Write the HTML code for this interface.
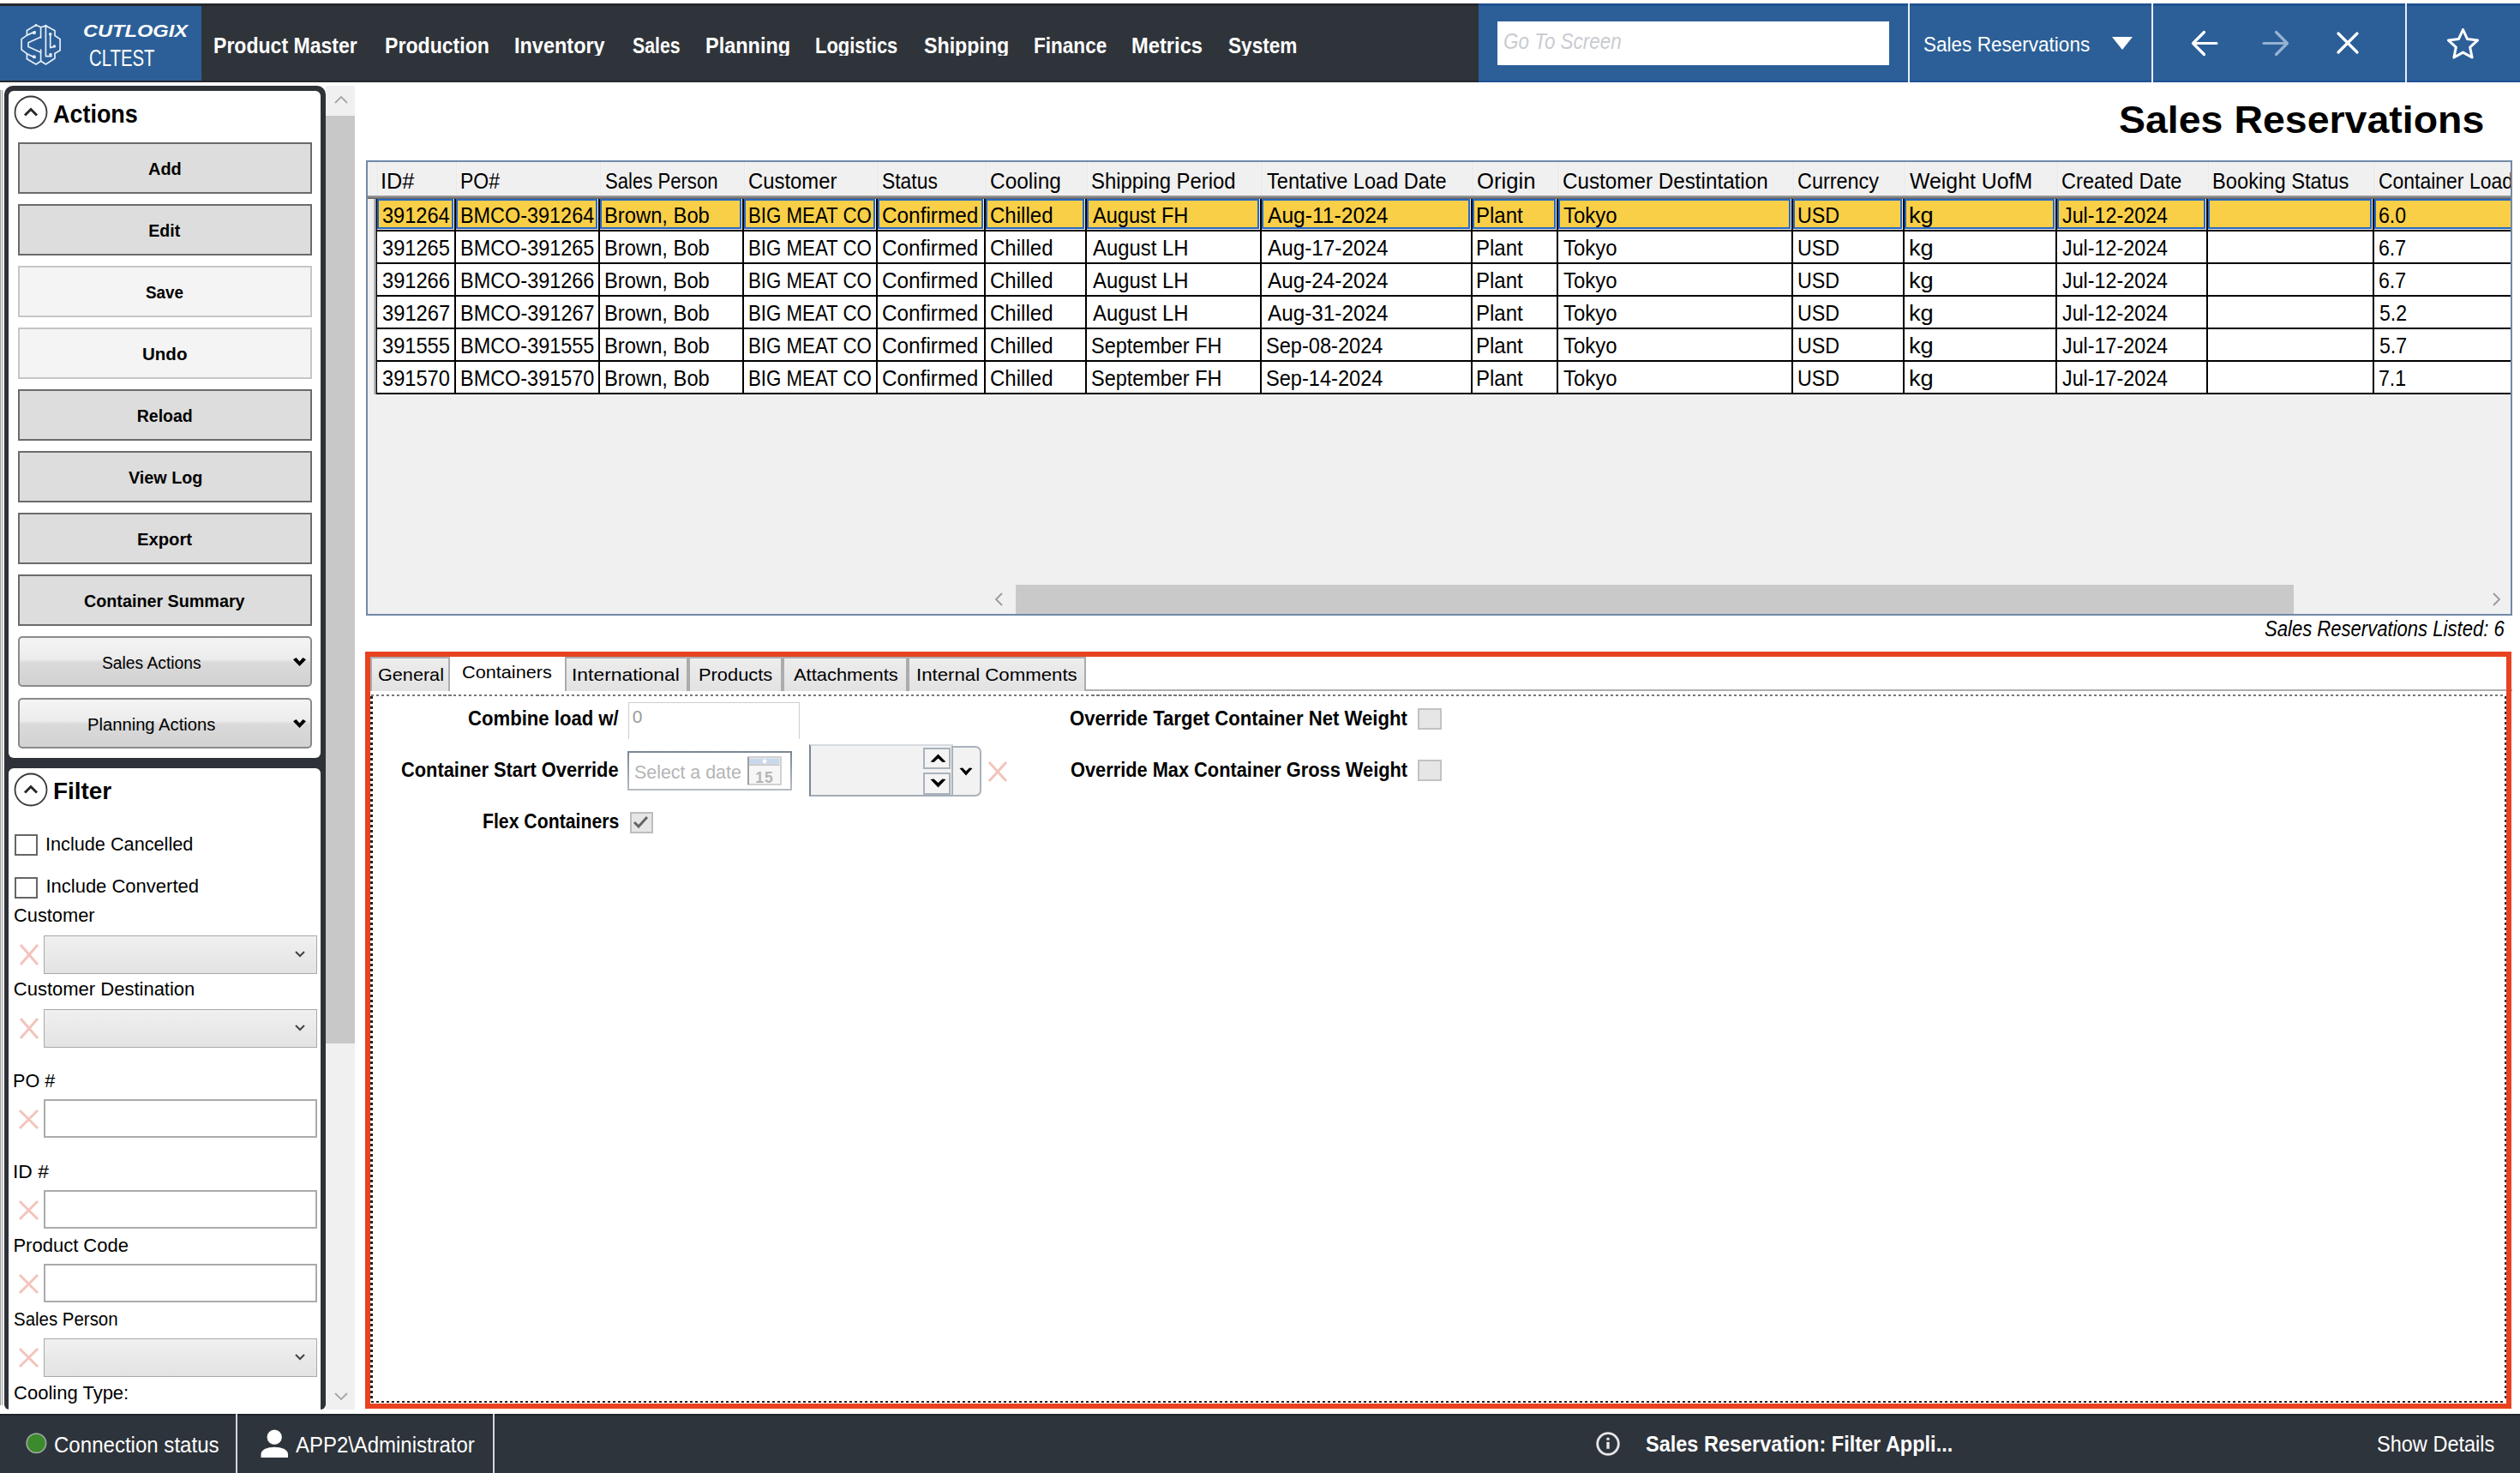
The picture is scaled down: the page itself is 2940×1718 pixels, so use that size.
<!DOCTYPE html>
<html><head><meta charset="utf-8"><style>
html,body{margin:0;padding:0;width:2940px;height:1718px;overflow:hidden;background:#fff;}
body{position:relative;font-family:"Liberation Sans", sans-serif;}
body div, body span, body svg{position:absolute;box-sizing:content-box;}
.t{white-space:nowrap;line-height:1;}
</style></head><body>
<div style="left:0px;top:4px;width:1725px;height:3px;background:#24282d"></div>
<div style="left:1725px;top:4px;width:1215px;height:3px;background:#1f5193"></div>
<div style="left:0px;top:7px;width:235px;height:87px;background:#2c5f98"></div>
<div style="left:235px;top:7px;width:1490px;height:87px;background:#2f343a"></div>
<div style="left:1725px;top:7px;width:1215px;height:87px;background:#2c5f98"></div>
<div style="left:0px;top:94px;width:1725px;height:2px;background:#25282d"></div>
<div style="left:1725px;top:94px;width:1215px;height:2px;background:#1f5193"></div>
<svg style="left:18px;top:22px" width="60" height="60" viewBox="0 0 60 60" fill="none" stroke="#e6eef6" stroke-width="1.7" stroke-linejoin="round" stroke-linecap="round">
<path d="M29.6 9.8 L24 7.3 L13.4 13.4 L13.4 19.1 L7.1 23.6 L7.1 35.8 L13.4 40.7 L13.4 46.8 L24 53 L29.7 49.3 L35.4 53 L46 46 L46 40.3 L52.1 36.7 L52.1 23.6 L46 19.5 L46 13.8 L35.4 8.1 L29.6 9.8"/>
<path d="M29.6 9.8 L29.6 22 M29.6 36 L29.6 49.3"/>
<path d="M13.4 19.1 L23 14.8 M13.4 40.7 L23 45.2"/>
<path d="M29.3 21.2 L15 27.7 L15 32.6 L29.3 39.1"/>
<path d="M35.4 8.1 L35.4 43.6 L42 43.6 M40.7 17.7 L40.7 33.6 L45.4 32.2"/>
</svg>
<svg style="left:18px;top:22px" width="60" height="60" viewBox="0 0 60 60" fill="#e6eef6"><circle cx="21.8" cy="16.2" r="2"/><circle cx="21.8" cy="44.3" r="2"/><circle cx="40.7" cy="17.7" r="1.8"/><circle cx="45.4" cy="32" r="1.8"/><circle cx="41" cy="41.5" r="1.8"/><circle cx="35.4" cy="8.3" r="1.6"/><circle cx="24" cy="7.5" r="1.4"/></svg>
<span class="t" style="left:96.52px;top:26.00px;font-size:20px;font-weight:700;color:#fff;font-style:italic;transform:scaleX(1.1810);transform-origin:0 0;">CUTLOGIX</span>
<span class="t" style="left:103.68px;top:55.00px;font-size:27px;font-weight:400;color:#fff;transform:scaleX(0.7528);transform-origin:0 0;">CLTEST</span>
<div style="left:0;top:30px;width:1725px;height:35px;overflow:hidden">
<span class="t" style="left:249.30px;top:11px;font-size:25px;font-weight:700;color:#fff;transform:scaleX(0.9222);transform-origin:0 0">Product Master</span>
<span class="t" style="left:448.70px;top:11px;font-size:25px;font-weight:700;color:#fff;transform:scaleX(0.9243);transform-origin:0 0">Production</span>
<span class="t" style="left:600.47px;top:11px;font-size:25px;font-weight:700;color:#fff;transform:scaleX(0.9391);transform-origin:0 0">Inventory</span>
<span class="t" style="left:737.66px;top:11px;font-size:25px;font-weight:700;color:#fff;transform:scaleX(0.8504);transform-origin:0 0">Sales</span>
<span class="t" style="left:823.47px;top:11px;font-size:25px;font-weight:700;color:#fff;transform:scaleX(0.9389);transform-origin:0 0">Planning</span>
<span class="t" style="left:951.47px;top:11px;font-size:25px;font-weight:700;color:#fff;transform:scaleX(0.8775);transform-origin:0 0">Logistics</span>
<span class="t" style="left:1077.60px;top:11px;font-size:25px;font-weight:700;color:#fff;transform:scaleX(0.9282);transform-origin:0 0">Shipping</span>
<span class="t" style="left:1205.53px;top:11px;font-size:25px;font-weight:700;color:#fff;transform:scaleX(0.9022);transform-origin:0 0">Finance</span>
<span class="t" style="left:1320.46px;top:11px;font-size:25px;font-weight:700;color:#fff;transform:scaleX(0.9485);transform-origin:0 0">Metrics</span>
<span class="t" style="left:1433.32px;top:11px;font-size:25px;font-weight:700;color:#fff;transform:scaleX(0.9049);transform-origin:0 0">System</span>
</div>
<div style="left:1747px;top:25px;width:457px;height:51px;background:#fff"></div>
<span class="t" style="left:1753.88px;top:36.00px;font-size:25px;font-weight:400;color:#c9ccd0;font-style:italic;transform:scaleX(0.8988);transform-origin:0 0;">Go To Screen</span>
<div style="left:2226px;top:4px;width:2px;height:92px;background:#e8edf3"></div>
<div style="left:2510px;top:4px;width:2px;height:92px;background:#e8edf3"></div>
<div style="left:2806px;top:4px;width:2px;height:92px;background:#e8edf3"></div>
<span class="t" style="left:2244.49px;top:40.00px;font-size:24.5px;font-weight:400;color:#fff;transform:scaleX(0.9201);transform-origin:0 0;">Sales Reservations</span>
<svg style="left:2463px;top:42px" width="26" height="17"><path d="M1 1 L25 1 L13 16 Z" fill="#fff"/></svg>
<svg style="left:2554px;top:33px" width="36" height="36" fill="none" stroke="#fff" stroke-width="3.2" stroke-linecap="round" stroke-linejoin="round"><path d="M4.5 17.5 L32 17.5 M17.5 4.5 L4.5 17.5 L17.5 30.5"/></svg>
<svg style="left:2637px;top:33px" width="36" height="36" fill="none" stroke="#94b3d3" stroke-width="3.2" stroke-linecap="round" stroke-linejoin="round"><path d="M4 17.5 L31.5 17.5 M18.5 4.5 L31.5 17.5 L18.5 30.5"/></svg>
<svg style="left:2722px;top:33px" width="34" height="34" fill="none" stroke="#fff" stroke-width="3.2" stroke-linecap="round"><path d="M6 6 L28 28 M28 6 L6 28"/></svg>
<svg style="left:2855px;top:32.5px" width="37" height="38" fill="none" stroke="#fff" stroke-width="3" stroke-linejoin="round"><path d="M18.50 1.50 L23.55 12.54 L35.62 13.94 L26.68 22.16 L29.08 34.06 L18.50 28.10 L7.92 34.06 L10.32 22.16 L1.38 13.94 L13.45 12.54 Z"/></svg>
<div style="left:0px;top:105px;width:1px;height:1534px;background:#9a9a9a"></div>
<div style="left:2px;top:105px;width:1px;height:1534px;background:#9a9a9a"></div>
<div style="left:5px;top:100px;width:375px;height:1544px;background:#2e3238;border-radius:10px 10px 6px 6px"></div>
<div style="left:10px;top:106px;width:364px;height:778px;background:#fff;border-radius:6px"></div>
<div style="left:10px;top:896px;width:364px;height:748px;background:#fff;border-radius:6px 6px 0 0"></div>
<div style="left:380px;top:100px;width:34px;height:35px;background:#f0f0f0"></div>
<div style="left:380px;top:135px;width:34px;height:1082px;background:#c8c8c8"></div>
<div style="left:380px;top:1217px;width:34px;height:427px;background:#f0f0f0"></div>
<svg style="left:389px;top:110px" width="18" height="12" fill="none" stroke="#a6a6a6" stroke-width="1.8"><path d="M2 10 L9 3 L16 10"/></svg>
<svg style="left:389px;top:1623px" width="18" height="12" fill="none" stroke="#a6a6a6" stroke-width="1.8"><path d="M2 2 L9 9 L16 2"/></svg>
<svg style="left:15px;top:110px" width="42" height="42" fill="none" stroke="#3a3a3a" stroke-width="1.8"><circle cx="21" cy="21" r="18.5"/><path d="M14 24.5 L21 17.5 L28 24.5" stroke="#2a2a2a" stroke-width="3"/></svg>
<span class="t" style="left:62.33px;top:119.00px;font-size:29px;font-weight:700;color:#000;transform:scaleX(0.9291);transform-origin:0 0;">Actions</span>
<div style="left:21px;top:166px;width:339px;height:56px;background:#dddddd;border:2px solid #6b6b6b"></div>
<span class="t" style="left:173.30px;top:188.00px;font-size:19.5px;font-weight:700;color:#000;transform:scaleX(1.0229);transform-origin:0 0;">Add</span>
<div style="left:21px;top:238px;width:339px;height:56px;background:#dddddd;border:2px solid #6b6b6b"></div>
<span class="t" style="left:173.33px;top:260.00px;font-size:19.5px;font-weight:700;color:#000;">Edit</span>
<div style="left:21px;top:310px;width:339px;height:56px;background:#f4f4f4;border:2px solid #c6c6c6"></div>
<span class="t" style="left:170.33px;top:332.00px;font-size:19.5px;font-weight:700;color:#000;transform:scaleX(0.9669);transform-origin:0 0;">Save</span>
<div style="left:21px;top:382px;width:339px;height:56px;background:#f4f4f4;border:2px solid #c6c6c6"></div>
<span class="t" style="left:165.87px;top:404.00px;font-size:19.5px;font-weight:700;color:#000;transform:scaleX(1.0528);transform-origin:0 0;">Undo</span>
<div style="left:21px;top:454px;width:339px;height:56px;background:#dddddd;border:2px solid #6b6b6b"></div>
<span class="t" style="left:159.78px;top:476.00px;font-size:19.5px;font-weight:700;color:#000;">Reload</span>
<div style="left:21px;top:526px;width:339px;height:56px;background:#dddddd;border:2px solid #6b6b6b"></div>
<span class="t" style="left:149.70px;top:548.00px;font-size:19.5px;font-weight:700;color:#000;transform:scaleX(1.0137);transform-origin:0 0;">View Log</span>
<div style="left:21px;top:598px;width:339px;height:56px;background:#dddddd;border:2px solid #6b6b6b"></div>
<span class="t" style="left:159.74px;top:620.00px;font-size:19.5px;font-weight:700;color:#000;transform:scaleX(1.0373);transform-origin:0 0;">Export</span>
<div style="left:21px;top:670px;width:339px;height:56px;background:#dddddd;border:2px solid #6b6b6b"></div>
<span class="t" style="left:98.21px;top:692.00px;font-size:19.5px;font-weight:700;color:#000;transform:scaleX(1.0121);transform-origin:0 0;">Container Summary</span>
<div style="left:21px;top:742px;width:339px;height:55px;border:2px solid #8a8a8a;border-radius:5px;background:linear-gradient(#f4f4f4 0%,#ececec 45%,#dadada 52%,#d2d2d2 100%)"></div>
<span class="t" style="left:119.43px;top:763.00px;font-size:20px;font-weight:400;color:#000;transform:scaleX(0.9629);transform-origin:0 0;">Sales Actions</span>
<svg style="left:342px;top:767px" width="15" height="11"><path d="M0 2.2 L3.6 0 L7.5 4.6 L11.4 0 L15 2.2 L7.5 10 Z" fill="#000"/></svg>
<div style="left:21px;top:814px;width:339px;height:55px;border:2px solid #8a8a8a;border-radius:5px;background:linear-gradient(#f4f4f4 0%,#ececec 45%,#dadada 52%,#d2d2d2 100%)"></div>
<span class="t" style="left:102.38px;top:835.00px;font-size:20px;font-weight:400;color:#000;transform:scaleX(1.0096);transform-origin:0 0;">Planning Actions</span>
<svg style="left:342px;top:839px" width="15" height="11"><path d="M0 2.2 L3.6 0 L7.5 4.6 L11.4 0 L15 2.2 L7.5 10 Z" fill="#000"/></svg>
<svg style="left:15px;top:900px" width="42" height="42" fill="none" stroke="#3a3a3a" stroke-width="1.8"><circle cx="21" cy="21" r="18.5"/><path d="M14 24.5 L21 17.5 L28 24.5" stroke="#2a2a2a" stroke-width="3"/></svg>
<span class="t" style="left:62.19px;top:909.00px;font-size:28px;font-weight:700;color:#000;transform:scaleX(0.9967);transform-origin:0 0;">Filter</span>
<div style="left:17px;top:973px;width:23px;height:21px;border:2px solid #666;background:#fff"></div>
<span class="t" style="left:53.45px;top:974.00px;font-size:22px;font-weight:400;color:#000;transform:scaleX(0.9855);transform-origin:0 0;">Include Cancelled</span>
<div style="left:17px;top:1023px;width:23px;height:21px;border:2px solid #666;background:#fff"></div>
<span class="t" style="left:53.42px;top:1023.00px;font-size:22px;font-weight:400;color:#000;">Include Converted</span>
<span class="t" style="left:15.81px;top:1057.00px;font-size:22px;font-weight:400;color:#000;transform:scaleX(0.9912);transform-origin:0 0;">Customer</span>
<svg style="left:22px;top:1100px" width="24" height="27" fill="none" stroke="#f2c4bc" stroke-width="3"><path d="M2 2 L22 25 M22 2 L2 25"/></svg>
<div style="left:51px;top:1091px;width:317px;height:43px;border:1px solid #a9a9a9;background:linear-gradient(#f0f0f0,#e3e3e3)"></div>
<svg style="left:343px;top:1107.5px" width="14" height="10" fill="none" stroke="#444" stroke-width="2"><path d="M2 2 L7 7 L12 2"/></svg>
<span class="t" style="left:15.80px;top:1143.00px;font-size:22px;font-weight:400;color:#000;">Customer Destination</span>
<svg style="left:22px;top:1186px" width="24" height="27" fill="none" stroke="#f2c4bc" stroke-width="3"><path d="M2 2 L22 25 M22 2 L2 25"/></svg>
<div style="left:51px;top:1177px;width:317px;height:43px;border:1px solid #a9a9a9;background:linear-gradient(#f0f0f0,#e3e3e3)"></div>
<svg style="left:343px;top:1193.5px" width="14" height="10" fill="none" stroke="#444" stroke-width="2"><path d="M2 2 L7 7 L12 2"/></svg>
<span class="t" style="left:15.47px;top:1250.00px;font-size:22px;font-weight:400;color:#000;transform:scaleX(0.9816);transform-origin:0 0;">PO #</span>
<svg style="left:21px;top:1293px" width="25" height="25" fill="none" stroke="#f2c4bc" stroke-width="3"><path d="M2 2 L23 23 M23 2 L2 23"/></svg>
<div style="left:51px;top:1282px;width:315px;height:41px;border:2px solid #ababab;background:#fff"></div>
<span class="t" style="left:15.14px;top:1356.00px;font-size:22px;font-weight:400;color:#000;transform:scaleX(1.0397);transform-origin:0 0;">ID #</span>
<svg style="left:21px;top:1399px" width="25" height="25" fill="none" stroke="#f2c4bc" stroke-width="3"><path d="M2 2 L23 23 M23 2 L2 23"/></svg>
<div style="left:51px;top:1388px;width:315px;height:41px;border:2px solid #ababab;background:#fff"></div>
<span class="t" style="left:15.44px;top:1442.00px;font-size:22px;font-weight:400;color:#000;">Product Code</span>
<svg style="left:21px;top:1485px" width="25" height="25" fill="none" stroke="#f2c4bc" stroke-width="3"><path d="M2 2 L23 23 M23 2 L2 23"/></svg>
<div style="left:51px;top:1474px;width:315px;height:41px;border:2px solid #ababab;background:#fff"></div>
<span class="t" style="left:16.28px;top:1528.00px;font-size:22px;font-weight:400;color:#000;transform:scaleX(0.9293);transform-origin:0 0;">Sales Person</span>
<svg style="left:21px;top:1571px" width="25" height="25" fill="none" stroke="#f2c4bc" stroke-width="3"><path d="M2 2 L23 23 M23 2 L2 23"/></svg>
<div style="left:51px;top:1561px;width:317px;height:43px;border:1px solid #a9a9a9;background:linear-gradient(#f0f0f0,#e3e3e3)"></div>
<svg style="left:343px;top:1577.5px" width="14" height="10" fill="none" stroke="#444" stroke-width="2"><path d="M2 2 L7 7 L12 2"/></svg>
<span class="t" style="left:16.10px;top:1614.00px;font-size:22px;font-weight:400;color:#000;">Cooling Type:</span>
<span class="t" style="left:2471.61px;top:119.00px;font-size:43.5px;font-weight:700;color:#000;transform:scaleX(1.0686);transform-origin:0 0;">Sales Reservations</span>
<div style="left:427px;top:187px;width:2500px;height:527px;border:2px solid #7189a9;background:#f0f0f0"></div>
<div style="left:429px;top:189px;width:2500px;height:43px;overflow:hidden">
<div style="left:11px;top:0;width:2px;height:39px;background:linear-gradient(90deg,#e2e2e2,#fafafa)"></div>
<span class="t" style="left:15.22px;top:10px;font-size:25.5px;transform:scaleX(0.9938);transform-origin:0 0">ID#</span>
<div style="left:103px;top:0;width:2px;height:39px;background:linear-gradient(90deg,#e2e2e2,#fafafa)"></div>
<span class="t" style="left:107.66px;top:10px;font-size:25.5px;transform:scaleX(0.9010);transform-origin:0 0">PO#</span>
<div style="left:271px;top:0;width:2px;height:39px;background:linear-gradient(90deg,#e2e2e2,#fafafa)"></div>
<span class="t" style="left:276.51px;top:10px;font-size:25.5px;transform:scaleX(0.8670);transform-origin:0 0">Sales Person</span>
<div style="left:439px;top:0;width:2px;height:39px;background:linear-gradient(90deg,#e2e2e2,#fafafa)"></div>
<span class="t" style="left:444.31px;top:10px;font-size:25.5px;transform:scaleX(0.9360);transform-origin:0 0">Customer</span>
<div style="left:595px;top:0;width:2px;height:39px;background:linear-gradient(90deg,#e2e2e2,#fafafa)"></div>
<span class="t" style="left:600.47px;top:10px;font-size:25.5px;transform:scaleX(0.8968);transform-origin:0 0">Status</span>
<div style="left:721px;top:0;width:2px;height:39px;background:linear-gradient(90deg,#e2e2e2,#fafafa)"></div>
<span class="t" style="left:726.28px;top:10px;font-size:25.5px;transform:scaleX(0.9579);transform-origin:0 0">Cooling</span>
<div style="left:839px;top:0;width:2px;height:39px;background:linear-gradient(90deg,#e2e2e2,#fafafa)"></div>
<span class="t" style="left:844.43px;top:10px;font-size:25.5px;transform:scaleX(0.9367);transform-origin:0 0">Shipping Period</span>
<div style="left:1043px;top:0;width:2px;height:39px;background:linear-gradient(90deg,#e2e2e2,#fafafa)"></div>
<span class="t" style="left:1049.03px;top:10px;font-size:25.5px;transform:scaleX(0.9238);transform-origin:0 0">Tentative Load Date</span>
<div style="left:1288.5px;top:0;width:2px;height:39px;background:linear-gradient(90deg,#e2e2e2,#fafafa)"></div>
<span class="t" style="left:1293.84px;top:10px;font-size:25.5px;transform:scaleX(1.0069);transform-origin:0 0">Origin</span>
<div style="left:1388.5px;top:0;width:2px;height:39px;background:linear-gradient(90deg,#e2e2e2,#fafafa)"></div>
<span class="t" style="left:1393.79px;top:10px;font-size:25.5px;transform:scaleX(0.9500);transform-origin:0 0">Customer Destintation</span>
<div style="left:1663px;top:0;width:2px;height:39px;background:linear-gradient(90deg,#e2e2e2,#fafafa)"></div>
<span class="t" style="left:1668.33px;top:10px;font-size:25.5px;transform:scaleX(0.9185);transform-origin:0 0">Currency</span>
<div style="left:1793px;top:0;width:2px;height:39px;background:linear-gradient(90deg,#e2e2e2,#fafafa)"></div>
<span class="t" style="left:1799.38px;top:10px;font-size:25.5px;transform:scaleX(0.9743);transform-origin:0 0">Weight UofM</span>
<div style="left:1971px;top:0;width:2px;height:39px;background:linear-gradient(90deg,#e2e2e2,#fafafa)"></div>
<span class="t" style="left:1976.32px;top:10px;font-size:25.5px;transform:scaleX(0.9251);transform-origin:0 0">Created Date</span>
<div style="left:2147px;top:0;width:2px;height:39px;background:linear-gradient(90deg,#e2e2e2,#fafafa)"></div>
<span class="t" style="left:2151.61px;top:10px;font-size:25.5px;transform:scaleX(0.9285);transform-origin:0 0">Booking Status</span>
<div style="left:2341px;top:0;width:2px;height:39px;background:linear-gradient(90deg,#e2e2e2,#fafafa)"></div>
<span class="t" style="left:2346.35px;top:10px;font-size:25.5px;transform:scaleX(0.9000);transform-origin:0 0">Container Load</span>
<div style="left:0;top:39px;width:2500px;height:4px;background:linear-gradient(#a8a8a8,#8a8a8a 45%,#5c5c5c)"></div>
</div>
<div style="left:436px;top:232px;width:4px;height:228px;background:linear-gradient(90deg,#d0d0d0,#5a5a5a)"></div>
<div style="left:439px;top:232px;width:2490px;height:230px;overflow:hidden">
<div style="left:1.0px;top:0px;width:85.0px;height:31px;background:#f8cf47;border:2.5px solid #2767c5"></div>
<span class="t" style="left:6.56px;top:6px;font-size:26px;transform:scaleX(0.9071);transform-origin:0 0">391264</span>
<div style="left:93.0px;top:0px;width:161.0px;height:31px;background:#f8cf47;border:2.5px solid #2767c5"></div>
<span class="t" style="left:97.63px;top:6px;font-size:26px;transform:scaleX(0.9006);transform-origin:0 0">BMCO-391264</span>
<div style="left:261.0px;top:0px;width:161.0px;height:31px;background:#f8cf47;border:2.5px solid #2767c5"></div>
<span class="t" style="left:265.60px;top:6px;font-size:26px;transform:scaleX(0.9139);transform-origin:0 0">Brown, Bob</span>
<div style="left:429.0px;top:0px;width:149.0px;height:31px;background:#f8cf47;border:2.5px solid #2767c5"></div>
<span class="t" style="left:433.72px;top:6px;font-size:26px;transform:scaleX(0.8561);transform-origin:0 0">BIG MEAT CO</span>
<div style="left:585.0px;top:0px;width:119.0px;height:31px;background:#f8cf47;border:2.5px solid #2767c5"></div>
<span class="t" style="left:590.28px;top:6px;font-size:26px;transform:scaleX(0.9361);transform-origin:0 0">Confirmed</span>
<div style="left:711.0px;top:0px;width:111.0px;height:31px;background:#f8cf47;border:2.5px solid #2767c5"></div>
<span class="t" style="left:716.30px;top:6px;font-size:26px;transform:scaleX(0.9249);transform-origin:0 0">Chilled</span>
<div style="left:829.0px;top:0px;width:197.0px;height:31px;background:#f8cf47;border:2.5px solid #2767c5"></div>
<span class="t" style="left:835.50px;top:6px;font-size:26px;transform:scaleX(0.9068);transform-origin:0 0">August FH</span>
<div style="left:1033.0px;top:0px;width:238.5px;height:31px;background:#f8cf47;border:2.5px solid #2767c5"></div>
<span class="t" style="left:1039.50px;top:6px;font-size:26px;transform:scaleX(0.9468);transform-origin:0 0">Aug-11-2024</span>
<div style="left:1278.5px;top:0px;width:93.0px;height:31px;background:#f8cf47;border:2.5px solid #2767c5"></div>
<span class="t" style="left:1283.08px;top:6px;font-size:26px;transform:scaleX(0.9238);transform-origin:0 0">Plant</span>
<div style="left:1378.5px;top:0px;width:267.5px;height:31px;background:#f8cf47;border:2.5px solid #2767c5"></div>
<span class="t" style="left:1384.52px;top:6px;font-size:26px;transform:scaleX(0.9201);transform-origin:0 0">Tokyo</span>
<div style="left:1653.0px;top:0px;width:123.0px;height:31px;background:#f8cf47;border:2.5px solid #2767c5"></div>
<span class="t" style="left:1657.76px;top:6px;font-size:26px;transform:scaleX(0.8949);transform-origin:0 0">USD</span>
<div style="left:1783.0px;top:0px;width:171.0px;height:31px;background:#f8cf47;border:2.5px solid #2767c5"></div>
<span class="t" style="left:1787.73px;top:6px;font-size:26px;transform:scaleX(1.0478);transform-origin:0 0">kg</span>
<div style="left:1961.0px;top:0px;width:169.0px;height:31px;background:#f8cf47;border:2.5px solid #2767c5"></div>
<span class="t" style="left:1967.15px;top:6px;font-size:26px;transform:scaleX(0.8963);transform-origin:0 0">Jul-12-2024</span>
<div style="left:2137.0px;top:0px;width:187.0px;height:31px;background:#f8cf47;border:2.5px solid #2767c5"></div>
<div style="left:2331.0px;top:0px;width:185.0px;height:31px;background:#f8cf47;border:2.5px solid #2767c5"></div>
<span class="t" style="left:2336.34px;top:6px;font-size:26px;transform:scaleX(0.8900);transform-origin:0 0">6.0</span>
<div style="left:0;top:36px;width:2490px;height:2.3px;background:#000"></div>
<div style="left:1.0px;top:38px;width:90.0px;height:36px;background:#fff"></div>
<span class="t" style="left:6.55px;top:44px;font-size:26px;transform:scaleX(0.9098);transform-origin:0 0">391265</span>
<div style="left:93.0px;top:38px;width:166.0px;height:36px;background:#fff"></div>
<span class="t" style="left:97.62px;top:44px;font-size:26px;transform:scaleX(0.9019);transform-origin:0 0">BMCO-391265</span>
<div style="left:261.0px;top:38px;width:166.0px;height:36px;background:#fff"></div>
<span class="t" style="left:265.60px;top:44px;font-size:26px;transform:scaleX(0.9139);transform-origin:0 0">Brown, Bob</span>
<div style="left:429.0px;top:38px;width:154.0px;height:36px;background:#fff"></div>
<span class="t" style="left:433.72px;top:44px;font-size:26px;transform:scaleX(0.8561);transform-origin:0 0">BIG MEAT CO</span>
<div style="left:585.0px;top:38px;width:124.0px;height:36px;background:#fff"></div>
<span class="t" style="left:590.28px;top:44px;font-size:26px;transform:scaleX(0.9361);transform-origin:0 0">Confirmed</span>
<div style="left:711.0px;top:38px;width:116.0px;height:36px;background:#fff"></div>
<span class="t" style="left:716.30px;top:44px;font-size:26px;transform:scaleX(0.9249);transform-origin:0 0">Chilled</span>
<div style="left:829.0px;top:38px;width:202.0px;height:36px;background:#fff"></div>
<span class="t" style="left:835.50px;top:44px;font-size:26px;transform:scaleX(0.9177);transform-origin:0 0">August LH</span>
<div style="left:1033.0px;top:38px;width:243.5px;height:36px;background:#fff"></div>
<span class="t" style="left:1039.50px;top:44px;font-size:26px;transform:scaleX(0.9344);transform-origin:0 0">Aug-17-2024</span>
<div style="left:1278.5px;top:38px;width:98.0px;height:36px;background:#fff"></div>
<span class="t" style="left:1283.08px;top:44px;font-size:26px;transform:scaleX(0.9238);transform-origin:0 0">Plant</span>
<div style="left:1378.5px;top:38px;width:272.5px;height:36px;background:#fff"></div>
<span class="t" style="left:1384.52px;top:44px;font-size:26px;transform:scaleX(0.9201);transform-origin:0 0">Tokyo</span>
<div style="left:1653.0px;top:38px;width:128.0px;height:36px;background:#fff"></div>
<span class="t" style="left:1657.76px;top:44px;font-size:26px;transform:scaleX(0.8949);transform-origin:0 0">USD</span>
<div style="left:1783.0px;top:38px;width:176.0px;height:36px;background:#fff"></div>
<span class="t" style="left:1787.73px;top:44px;font-size:26px;transform:scaleX(1.0478);transform-origin:0 0">kg</span>
<div style="left:1961.0px;top:38px;width:174.0px;height:36px;background:#fff"></div>
<span class="t" style="left:1967.15px;top:44px;font-size:26px;transform:scaleX(0.8963);transform-origin:0 0">Jul-12-2024</span>
<div style="left:2137.0px;top:38px;width:192.0px;height:36px;background:#fff"></div>
<div style="left:2331.0px;top:38px;width:190.0px;height:36px;background:#fff"></div>
<span class="t" style="left:2336.34px;top:44px;font-size:26px;transform:scaleX(0.8900);transform-origin:0 0">6.7</span>
<div style="left:0;top:74px;width:2490px;height:2.3px;background:#000"></div>
<div style="left:1.0px;top:76px;width:90.0px;height:36px;background:#fff"></div>
<span class="t" style="left:6.55px;top:82px;font-size:26px;transform:scaleX(0.9098);transform-origin:0 0">391266</span>
<div style="left:93.0px;top:76px;width:166.0px;height:36px;background:#fff"></div>
<span class="t" style="left:97.62px;top:82px;font-size:26px;transform:scaleX(0.9019);transform-origin:0 0">BMCO-391266</span>
<div style="left:261.0px;top:76px;width:166.0px;height:36px;background:#fff"></div>
<span class="t" style="left:265.60px;top:82px;font-size:26px;transform:scaleX(0.9139);transform-origin:0 0">Brown, Bob</span>
<div style="left:429.0px;top:76px;width:154.0px;height:36px;background:#fff"></div>
<span class="t" style="left:433.72px;top:82px;font-size:26px;transform:scaleX(0.8561);transform-origin:0 0">BIG MEAT CO</span>
<div style="left:585.0px;top:76px;width:124.0px;height:36px;background:#fff"></div>
<span class="t" style="left:590.28px;top:82px;font-size:26px;transform:scaleX(0.9361);transform-origin:0 0">Confirmed</span>
<div style="left:711.0px;top:76px;width:116.0px;height:36px;background:#fff"></div>
<span class="t" style="left:716.30px;top:82px;font-size:26px;transform:scaleX(0.9249);transform-origin:0 0">Chilled</span>
<div style="left:829.0px;top:76px;width:202.0px;height:36px;background:#fff"></div>
<span class="t" style="left:835.50px;top:82px;font-size:26px;transform:scaleX(0.9177);transform-origin:0 0">August LH</span>
<div style="left:1033.0px;top:76px;width:243.5px;height:36px;background:#fff"></div>
<span class="t" style="left:1039.50px;top:82px;font-size:26px;transform:scaleX(0.9344);transform-origin:0 0">Aug-24-2024</span>
<div style="left:1278.5px;top:76px;width:98.0px;height:36px;background:#fff"></div>
<span class="t" style="left:1283.08px;top:82px;font-size:26px;transform:scaleX(0.9238);transform-origin:0 0">Plant</span>
<div style="left:1378.5px;top:76px;width:272.5px;height:36px;background:#fff"></div>
<span class="t" style="left:1384.52px;top:82px;font-size:26px;transform:scaleX(0.9201);transform-origin:0 0">Tokyo</span>
<div style="left:1653.0px;top:76px;width:128.0px;height:36px;background:#fff"></div>
<span class="t" style="left:1657.76px;top:82px;font-size:26px;transform:scaleX(0.8949);transform-origin:0 0">USD</span>
<div style="left:1783.0px;top:76px;width:176.0px;height:36px;background:#fff"></div>
<span class="t" style="left:1787.73px;top:82px;font-size:26px;transform:scaleX(1.0478);transform-origin:0 0">kg</span>
<div style="left:1961.0px;top:76px;width:174.0px;height:36px;background:#fff"></div>
<span class="t" style="left:1967.15px;top:82px;font-size:26px;transform:scaleX(0.8963);transform-origin:0 0">Jul-12-2024</span>
<div style="left:2137.0px;top:76px;width:192.0px;height:36px;background:#fff"></div>
<div style="left:2331.0px;top:76px;width:190.0px;height:36px;background:#fff"></div>
<span class="t" style="left:2336.34px;top:82px;font-size:26px;transform:scaleX(0.8900);transform-origin:0 0">6.7</span>
<div style="left:0;top:112px;width:2490px;height:2.3px;background:#000"></div>
<div style="left:1.0px;top:114px;width:90.0px;height:36px;background:#fff"></div>
<span class="t" style="left:6.55px;top:120px;font-size:26px;transform:scaleX(0.9126);transform-origin:0 0">391267</span>
<div style="left:93.0px;top:114px;width:166.0px;height:36px;background:#fff"></div>
<span class="t" style="left:97.62px;top:120px;font-size:26px;transform:scaleX(0.9033);transform-origin:0 0">BMCO-391267</span>
<div style="left:261.0px;top:114px;width:166.0px;height:36px;background:#fff"></div>
<span class="t" style="left:265.60px;top:120px;font-size:26px;transform:scaleX(0.9139);transform-origin:0 0">Brown, Bob</span>
<div style="left:429.0px;top:114px;width:154.0px;height:36px;background:#fff"></div>
<span class="t" style="left:433.72px;top:120px;font-size:26px;transform:scaleX(0.8561);transform-origin:0 0">BIG MEAT CO</span>
<div style="left:585.0px;top:114px;width:124.0px;height:36px;background:#fff"></div>
<span class="t" style="left:590.28px;top:120px;font-size:26px;transform:scaleX(0.9361);transform-origin:0 0">Confirmed</span>
<div style="left:711.0px;top:114px;width:116.0px;height:36px;background:#fff"></div>
<span class="t" style="left:716.30px;top:120px;font-size:26px;transform:scaleX(0.9249);transform-origin:0 0">Chilled</span>
<div style="left:829.0px;top:114px;width:202.0px;height:36px;background:#fff"></div>
<span class="t" style="left:835.50px;top:120px;font-size:26px;transform:scaleX(0.9177);transform-origin:0 0">August LH</span>
<div style="left:1033.0px;top:114px;width:243.5px;height:36px;background:#fff"></div>
<span class="t" style="left:1039.50px;top:120px;font-size:26px;transform:scaleX(0.9344);transform-origin:0 0">Aug-31-2024</span>
<div style="left:1278.5px;top:114px;width:98.0px;height:36px;background:#fff"></div>
<span class="t" style="left:1283.08px;top:120px;font-size:26px;transform:scaleX(0.9238);transform-origin:0 0">Plant</span>
<div style="left:1378.5px;top:114px;width:272.5px;height:36px;background:#fff"></div>
<span class="t" style="left:1384.52px;top:120px;font-size:26px;transform:scaleX(0.9201);transform-origin:0 0">Tokyo</span>
<div style="left:1653.0px;top:114px;width:128.0px;height:36px;background:#fff"></div>
<span class="t" style="left:1657.76px;top:120px;font-size:26px;transform:scaleX(0.8949);transform-origin:0 0">USD</span>
<div style="left:1783.0px;top:114px;width:176.0px;height:36px;background:#fff"></div>
<span class="t" style="left:1787.73px;top:120px;font-size:26px;transform:scaleX(1.0478);transform-origin:0 0">kg</span>
<div style="left:1961.0px;top:114px;width:174.0px;height:36px;background:#fff"></div>
<span class="t" style="left:1967.15px;top:120px;font-size:26px;transform:scaleX(0.8963);transform-origin:0 0">Jul-12-2024</span>
<div style="left:2137.0px;top:114px;width:192.0px;height:36px;background:#fff"></div>
<div style="left:2331.0px;top:114px;width:190.0px;height:36px;background:#fff"></div>
<span class="t" style="left:2336.57px;top:120px;font-size:26px;transform:scaleX(0.8900);transform-origin:0 0">5.2</span>
<div style="left:0;top:150px;width:2490px;height:2.3px;background:#000"></div>
<div style="left:1.0px;top:152px;width:90.0px;height:36px;background:#fff"></div>
<span class="t" style="left:6.55px;top:158px;font-size:26px;transform:scaleX(0.9098);transform-origin:0 0">391555</span>
<div style="left:93.0px;top:152px;width:166.0px;height:36px;background:#fff"></div>
<span class="t" style="left:97.62px;top:158px;font-size:26px;transform:scaleX(0.9019);transform-origin:0 0">BMCO-391555</span>
<div style="left:261.0px;top:152px;width:166.0px;height:36px;background:#fff"></div>
<span class="t" style="left:265.60px;top:158px;font-size:26px;transform:scaleX(0.9139);transform-origin:0 0">Brown, Bob</span>
<div style="left:429.0px;top:152px;width:154.0px;height:36px;background:#fff"></div>
<span class="t" style="left:433.72px;top:158px;font-size:26px;transform:scaleX(0.8561);transform-origin:0 0">BIG MEAT CO</span>
<div style="left:585.0px;top:152px;width:124.0px;height:36px;background:#fff"></div>
<span class="t" style="left:590.28px;top:158px;font-size:26px;transform:scaleX(0.9361);transform-origin:0 0">Confirmed</span>
<div style="left:711.0px;top:152px;width:116.0px;height:36px;background:#fff"></div>
<span class="t" style="left:716.30px;top:158px;font-size:26px;transform:scaleX(0.9249);transform-origin:0 0">Chilled</span>
<div style="left:829.0px;top:152px;width:202.0px;height:36px;background:#fff"></div>
<span class="t" style="left:834.45px;top:158px;font-size:26px;transform:scaleX(0.9014);transform-origin:0 0">September FH</span>
<div style="left:1033.0px;top:152px;width:243.5px;height:36px;background:#fff"></div>
<span class="t" style="left:1038.44px;top:158px;font-size:26px;transform:scaleX(0.9074);transform-origin:0 0">Sep-08-2024</span>
<div style="left:1278.5px;top:152px;width:98.0px;height:36px;background:#fff"></div>
<span class="t" style="left:1283.08px;top:158px;font-size:26px;transform:scaleX(0.9238);transform-origin:0 0">Plant</span>
<div style="left:1378.5px;top:152px;width:272.5px;height:36px;background:#fff"></div>
<span class="t" style="left:1384.52px;top:158px;font-size:26px;transform:scaleX(0.9201);transform-origin:0 0">Tokyo</span>
<div style="left:1653.0px;top:152px;width:128.0px;height:36px;background:#fff"></div>
<span class="t" style="left:1657.76px;top:158px;font-size:26px;transform:scaleX(0.8949);transform-origin:0 0">USD</span>
<div style="left:1783.0px;top:152px;width:176.0px;height:36px;background:#fff"></div>
<span class="t" style="left:1787.73px;top:158px;font-size:26px;transform:scaleX(1.0478);transform-origin:0 0">kg</span>
<div style="left:1961.0px;top:152px;width:174.0px;height:36px;background:#fff"></div>
<span class="t" style="left:1967.15px;top:158px;font-size:26px;transform:scaleX(0.8963);transform-origin:0 0">Jul-17-2024</span>
<div style="left:2137.0px;top:152px;width:192.0px;height:36px;background:#fff"></div>
<div style="left:2331.0px;top:152px;width:190.0px;height:36px;background:#fff"></div>
<span class="t" style="left:2336.57px;top:158px;font-size:26px;transform:scaleX(0.8900);transform-origin:0 0">5.7</span>
<div style="left:0;top:188px;width:2490px;height:2.3px;background:#000"></div>
<div style="left:1.0px;top:190px;width:90.0px;height:36px;background:#fff"></div>
<span class="t" style="left:6.56px;top:196px;font-size:26px;transform:scaleX(0.9084);transform-origin:0 0">391570</span>
<div style="left:93.0px;top:190px;width:166.0px;height:36px;background:#fff"></div>
<span class="t" style="left:97.63px;top:196px;font-size:26px;transform:scaleX(0.9012);transform-origin:0 0">BMCO-391570</span>
<div style="left:261.0px;top:190px;width:166.0px;height:36px;background:#fff"></div>
<span class="t" style="left:265.60px;top:196px;font-size:26px;transform:scaleX(0.9139);transform-origin:0 0">Brown, Bob</span>
<div style="left:429.0px;top:190px;width:154.0px;height:36px;background:#fff"></div>
<span class="t" style="left:433.72px;top:196px;font-size:26px;transform:scaleX(0.8561);transform-origin:0 0">BIG MEAT CO</span>
<div style="left:585.0px;top:190px;width:124.0px;height:36px;background:#fff"></div>
<span class="t" style="left:590.28px;top:196px;font-size:26px;transform:scaleX(0.9361);transform-origin:0 0">Confirmed</span>
<div style="left:711.0px;top:190px;width:116.0px;height:36px;background:#fff"></div>
<span class="t" style="left:716.30px;top:196px;font-size:26px;transform:scaleX(0.9249);transform-origin:0 0">Chilled</span>
<div style="left:829.0px;top:190px;width:202.0px;height:36px;background:#fff"></div>
<span class="t" style="left:834.45px;top:196px;font-size:26px;transform:scaleX(0.9014);transform-origin:0 0">September FH</span>
<div style="left:1033.0px;top:190px;width:243.5px;height:36px;background:#fff"></div>
<span class="t" style="left:1038.44px;top:196px;font-size:26px;transform:scaleX(0.9074);transform-origin:0 0">Sep-14-2024</span>
<div style="left:1278.5px;top:190px;width:98.0px;height:36px;background:#fff"></div>
<span class="t" style="left:1283.08px;top:196px;font-size:26px;transform:scaleX(0.9238);transform-origin:0 0">Plant</span>
<div style="left:1378.5px;top:190px;width:272.5px;height:36px;background:#fff"></div>
<span class="t" style="left:1384.52px;top:196px;font-size:26px;transform:scaleX(0.9201);transform-origin:0 0">Tokyo</span>
<div style="left:1653.0px;top:190px;width:128.0px;height:36px;background:#fff"></div>
<span class="t" style="left:1657.76px;top:196px;font-size:26px;transform:scaleX(0.8949);transform-origin:0 0">USD</span>
<div style="left:1783.0px;top:190px;width:176.0px;height:36px;background:#fff"></div>
<span class="t" style="left:1787.73px;top:196px;font-size:26px;transform:scaleX(1.0478);transform-origin:0 0">kg</span>
<div style="left:1961.0px;top:190px;width:174.0px;height:36px;background:#fff"></div>
<span class="t" style="left:1967.15px;top:196px;font-size:26px;transform:scaleX(0.8963);transform-origin:0 0">Jul-17-2024</span>
<div style="left:2137.0px;top:190px;width:192.0px;height:36px;background:#fff"></div>
<div style="left:2331.0px;top:190px;width:190.0px;height:36px;background:#fff"></div>
<span class="t" style="left:2336.34px;top:196px;font-size:26px;transform:scaleX(0.8900);transform-origin:0 0">7.1</span>
<div style="left:0;top:226px;width:2490px;height:2.3px;background:#000"></div>
<div style="left:-1.0px;top:0;width:2.3px;height:228px;background:#000"></div>
<div style="left:91.0px;top:0;width:2.3px;height:228px;background:#000"></div>
<div style="left:259.0px;top:0;width:2.3px;height:228px;background:#000"></div>
<div style="left:427.0px;top:0;width:2.3px;height:228px;background:#000"></div>
<div style="left:583.0px;top:0;width:2.3px;height:228px;background:#000"></div>
<div style="left:709.0px;top:0;width:2.3px;height:228px;background:#000"></div>
<div style="left:827.0px;top:0;width:2.3px;height:228px;background:#000"></div>
<div style="left:1031.0px;top:0;width:2.3px;height:228px;background:#000"></div>
<div style="left:1276.5px;top:0;width:2.3px;height:228px;background:#000"></div>
<div style="left:1376.5px;top:0;width:2.3px;height:228px;background:#000"></div>
<div style="left:1651.0px;top:0;width:2.3px;height:228px;background:#000"></div>
<div style="left:1781.0px;top:0;width:2.3px;height:228px;background:#000"></div>
<div style="left:1959.0px;top:0;width:2.3px;height:228px;background:#000"></div>
<div style="left:2135.0px;top:0;width:2.3px;height:228px;background:#000"></div>
<div style="left:2329.0px;top:0;width:2.3px;height:228px;background:#000"></div>
</div>
<div style="left:1185px;top:682px;width:1491px;height:34px;background:#c9c9c9"></div>
<svg style="left:1158px;top:690px" width="14" height="18" fill="none" stroke="#9a9a9a" stroke-width="1.8"><path d="M11 2 L4 9 L11 16"/></svg>
<svg style="left:2906px;top:690px" width="14" height="18" fill="none" stroke="#9a9a9a" stroke-width="1.8"><path d="M3 2 L10 9 L3 16"/></svg>
<span class="t" style="left:2641.74px;top:721.00px;font-size:25px;font-weight:400;color:#000;font-style:italic;transform:scaleX(0.8829);transform-origin:0 0;">Sales Reservations Listed: 6</span>
<div style="left:426px;top:760px;width:2504px;height:884px;background:#fff"></div>
<div style="left:432px;top:804px;width:2499px;height:2px;background:#b0b0b0"></div>
<div style="left:432px;top:766px;width:88.70000000000005px;height:38px;background:linear-gradient(#ededed,#e2e2e2);border:2px solid #acacac;border-bottom:none"></div>
<span class="t" style="left:440.52px;top:776.00px;font-size:21px;font-weight:400;color:#000;transform:scaleX(1.0299);transform-origin:0 0;">General</span>
<div style="left:524.7px;top:766px;width:134.5px;height:40px;background:#fff"></div>
<span class="t" style="left:539.42px;top:773.00px;font-size:21px;font-weight:400;color:#000;transform:scaleX(1.0326);transform-origin:0 0;">Containers</span>
<div style="left:659.2px;top:766px;width:139.79999999999995px;height:38px;background:linear-gradient(#ededed,#e2e2e2);border:2px solid #acacac;border-bottom:none"></div>
<span class="t" style="left:666.54px;top:776.00px;font-size:21px;font-weight:400;color:#000;transform:scaleX(1.0887);transform-origin:0 0;">International</span>
<div style="left:803px;top:766px;width:106.39999999999998px;height:38px;background:linear-gradient(#ededed,#e2e2e2);border:2px solid #acacac;border-bottom:none"></div>
<span class="t" style="left:814.55px;top:776.00px;font-size:21px;font-weight:400;color:#000;transform:scaleX(1.0407);transform-origin:0 0;">Products</span>
<div style="left:913.4px;top:766px;width:141.60000000000002px;height:38px;background:linear-gradient(#ededed,#e2e2e2);border:2px solid #acacac;border-bottom:none"></div>
<span class="t" style="left:925.60px;top:776.00px;font-size:21px;font-weight:400;color:#000;transform:scaleX(1.0429);transform-origin:0 0;">Attachments</span>
<div style="left:1059px;top:766px;width:203.70000000000005px;height:38px;background:linear-gradient(#ededed,#e2e2e2);border:2px solid #acacac;border-bottom:none"></div>
<span class="t" style="left:1069.20px;top:776.00px;font-size:21px;font-weight:400;color:#000;transform:scaleX(1.0582);transform-origin:0 0;">Internal Comments</span>
<div style="left:433px;top:810px;width:2490px;height:2px;background:repeating-linear-gradient(90deg,#777 0 3.5px,transparent 3.5px 6px)"></div>
<div style="left:432px;top:812px;width:2.5px;height:822px;background:repeating-linear-gradient(180deg,#222 0 3px,transparent 3px 6px)"></div>
<div style="left:433px;top:1633.5px;width:2490px;height:2px;background:repeating-linear-gradient(90deg,#222 0 3px,transparent 3px 6px)"></div>
<div style="left:2922px;top:812px;width:2px;height:822px;background:repeating-linear-gradient(180deg,#333 0 3px,transparent 3px 6px)"></div>
<span class="t" style="left:545.52px;top:827.00px;font-size:23.3px;font-weight:700;color:#000;transform:scaleX(0.9492);transform-origin:0 0;">Combine load w/</span>
<span class="t" style="left:468.13px;top:887.00px;font-size:23.3px;font-weight:700;color:#000;transform:scaleX(0.9372);transform-origin:0 0;">Container Start Override</span>
<span class="t" style="left:562.62px;top:947.00px;font-size:23.3px;font-weight:700;color:#000;transform:scaleX(0.9112);transform-origin:0 0;">Flex Containers</span>
<div style="left:733px;top:819px;width:198px;height:42px;border:1px solid #cfcfcf;border-bottom:none;background:#fff"></div>
<span class="t" style="left:737.66px;top:825.00px;font-size:21px;font-weight:400;color:#9a9a9a;">0</span>
<div style="left:732px;top:876px;width:188px;height:42px;border:2px solid #7b8794;border-image:linear-gradient(#7b8794,#b4bcc4) 1;background:#fff"></div>
<span class="t" style="left:740.04px;top:890.00px;font-size:22px;font-weight:400;color:#b5b5b5;transform:scaleX(0.9716);transform-origin:0 0;">Select a date</span>
<svg style="left:872px;top:882px" width="41" height="36"><rect x="0.5" y="1" width="38.5" height="32" fill="#f6f6f6" stroke="#c9c9c9" stroke-width="1.6"/><rect x="0" y="1" width="2" height="32" fill="#a0a0a0"/><rect x="2" y="2.5" width="35.5" height="7" fill="#c9d8ea"/><rect x="2" y="9.5" width="35.5" height="1.5" fill="#c4c4c4"/><circle cx="20" cy="6" r="2.4" fill="#fff"/><text x="20" y="30.5" style="font-family:'Liberation Sans';font-weight:700" font-size="17.5" fill="#b5b5b5" text-anchor="middle" letter-spacing="1">15</text></svg>
<div style="left:944px;top:868px;width:166px;height:57px;border-left:2px solid #7a8896;border-top:2px solid #d6dbe0;border-bottom:2px solid #a3adb8;background:#f2f2f2"></div>
<div style="left:1110px;top:870px;width:31px;height:55px;border:2px solid #aab2ba;border-radius:0 7px 7px 0;background:#f2f2f2"></div>
<div style="left:1077px;top:872px;width:28px;height:21px;border:2px solid #aab2ba;background:#f4f4f4"></div>
<div style="left:1077px;top:901px;width:28px;height:22px;border:2px solid #aab2ba;background:#f4f4f4"></div>
<svg style="left:1085px;top:879px" width="19" height="11"><path d="M0.5 9.5 L9.5 0.5 L18.5 9.5 L14.5 10 L9.5 5.5 L4.5 10 Z" fill="#000"/></svg>
<svg style="left:1085px;top:908px" width="19" height="11"><path d="M0.5 1 L9.5 10.5 L18.5 1 L14.5 0.5 L9.5 5 L4.5 0.5 Z" fill="#000"/></svg>
<svg style="left:1119px;top:895px" width="16" height="10"><path d="M0.5 1 L8 9.5 L15.5 1 L12 0.5 L8 4.5 L4 0.5 Z" fill="#000"/></svg>
<svg style="left:1152px;top:887px" width="24" height="26" fill="none" stroke="#f2c4bc" stroke-width="3"><path d="M2 2 L22 24 M22 2 L2 24"/></svg>
<div style="left:735px;top:947px;width:23px;height:21px;border:2px solid #bdbdbd;background:#e6e6e6"></div>
<svg style="left:738px;top:950px" width="20" height="18" fill="none" stroke="#666" stroke-width="3"><path d="M2 9 L7 14 L17 3"/></svg>
<span class="t" style="left:1248.12px;top:827.00px;font-size:23.3px;font-weight:700;color:#000;transform:scaleX(0.9496);transform-origin:0 0;">Override Target Container Net Weight</span>
<span class="t" style="left:1248.73px;top:887.00px;font-size:23.3px;font-weight:700;color:#000;transform:scaleX(0.9352);transform-origin:0 0;">Override Max Container Gross Weight</span>
<div style="left:1654px;top:826px;width:24px;height:21px;border:2px solid #c2c2c2;background:#e6e6e6"></div>
<div style="left:1654px;top:886px;width:24px;height:21px;border:2px solid #c2c2c2;background:#e6e6e6"></div>
<div style="left:426px;top:760px;width:2492px;height:871px;border:6px solid #e84220"></div>
<div style="left:0px;top:1649px;width:2940px;height:69px;background:#2e343b"></div>
<div style="left:0px;top:1649px;width:2940px;height:2px;background:#1f242a"></div>
<div style="left:275px;top:1649px;width:2px;height:69px;background:#d3d7dc"></div>
<div style="left:574.7px;top:1649px;width:2px;height:69px;background:#d3d7dc"></div>
<svg style="left:28px;top:1669px" width="29" height="29"><circle cx="14.4" cy="14.3" r="11.3" fill="#3b8a2c" stroke="#a0a8a0" stroke-width="1.5"/></svg>
<span class="t" style="left:63.10px;top:1672.00px;font-size:26.5px;font-weight:400;color:#fff;transform:scaleX(0.9077);transform-origin:0 0;">Connection status</span>
<svg style="left:303px;top:1666px" width="35" height="35"><circle cx="17.2" cy="10.2" r="8.6" fill="#fff"/><path d="M1.5 34 L1.5 30 C1.5 19 33 19 33 30 L33 34 Z" fill="#fff"/></svg>
<span class="t" style="left:345.20px;top:1672.00px;font-size:26.5px;font-weight:400;color:#fff;transform:scaleX(0.9029);transform-origin:0 0;">APP2\Administrator</span>
<svg style="left:1861px;top:1669px" width="30" height="30" fill="none" stroke="#e6e6e6" stroke-width="2.8"><circle cx="15" cy="15" r="12.3"/><path d="M15 12.8 L15 20.8" stroke-width="3.4"/><circle cx="15" cy="9.2" r="1.8" fill="#e6e6e6" stroke="none"/></svg>
<span class="t" style="left:1920.30px;top:1671.00px;font-size:26.5px;font-weight:700;color:#fff;transform:scaleX(0.8867);transform-origin:0 0;">Sales Reservation: Filter Appli...</span>
<span class="t" style="left:2772.54px;top:1671.00px;font-size:26.5px;font-weight:400;color:#fff;transform:scaleX(0.8878);transform-origin:0 0;">Show Details</span>
</body></html>
